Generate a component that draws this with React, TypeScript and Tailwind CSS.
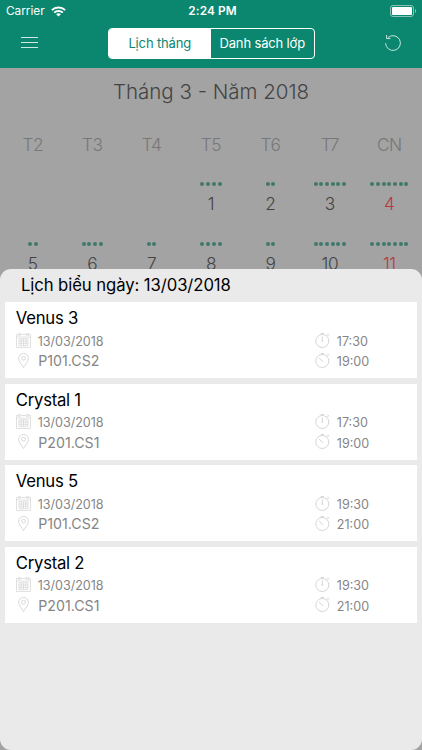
const weekdays = ['T2', 'T3', 'T4', 'T5', 'T6', 'T7', 'CN'];

const weeks = [
  [null, null, null, { day: 1, dots: 4 }, { day: 2, dots: 2 }, { day: 3, dots: 6 }, { day: 4, dots: 7 }],
  [
    { day: 5, dots: 2 },
    { day: 6, dots: 4 },
    { day: 7, dots: 2 },
    { day: 8, dots: 4 },
    { day: 9, dots: 2 },
    { day: 10, dots: 6 },
    { day: 11, dots: 7 },
  ],
];

const lessons = [
  { name: 'Venus 3', date: '13/03/2018', room: 'P101.CS2', start: '17:30', end: '19:00' },
  { name: 'Crystal 1', date: '13/03/2018', room: 'P201.CS1', start: '17:30', end: '19:00' },
  { name: 'Venus 5', date: '13/03/2018', room: 'P101.CS2', start: '19:30', end: '21:00' },
  { name: 'Crystal 2', date: '13/03/2018', room: 'P201.CS1', start: '19:30', end: '21:00' },
];

function WifiIcon() {
  return (
    <svg className="w-[15px] h-[11px]" viewBox="0 0 14 11" preserveAspectRatio="none" fill="none" stroke="white" strokeWidth="1.9">
      <path d="M0.8 4.1a8.8 8.8 0 0 1 12.4 0" />
      <path d="M3 6.6a5.7 5.7 0 0 1 8 0" />
      <path d="M7 10.6L4.8 8.3a3.2 3.2 0 0 1 4.4 0z" fill="white" stroke="none" />
    </svg>
  );
}

function BatteryIcon() {
  return (
    <svg className="w-[27px] h-[12px]" viewBox="0 0 27 12" fill="none">
      <rect x="0.5" y="0.5" width="23" height="11" rx="2.5" stroke="white" strokeOpacity="0.5" />
      <rect x="2" y="2" width="20" height="8" rx="1" fill="white" />
      <path d="M25 4v4c1.6-.5 1.6-3.5 0-4z" fill="white" fillOpacity="0.5" />
    </svg>
  );
}

function ReloadIcon() {
  return (
    <svg className="w-[18px] h-[18px]" viewBox="0 0 18 18" fill="none" stroke="white" strokeOpacity="0.85" strokeWidth="0.9">
      <path d="M1.6 9.2A7.4 7.4 0 1 0 4 3.6" />
      <path d="M2.6 1v3.6h3.8" />
    </svg>
  );
}

function CalendarIcon() {
  return (
    <svg className="w-[15px] h-[15px]" viewBox="0 0 15 15" fill="none" stroke="#d4d4d4" strokeWidth="0.7">
      <path d="M2.3 1.5H0.5v13h14v-13h-1.8M4.3 1.5h6.4M0.5 4h14" />
      <path d="M2.3 0.4h2v2h-2zM10.7 0.4h2v2h-2z" />
      <path d="M3 5.7h9v7H3zM5.25 5.7v7M7.5 5.7v7M9.75 5.7v7M3 8h9M3 10.3h9" />
    </svg>
  );
}

function PinIcon() {
  return (
    <svg className="w-[15px] h-[15px]" viewBox="0 0 15 15" fill="none" stroke="#cfcfcf" strokeWidth="0.8">
      <path d="M7.5 14.5C5.6 11.2 2.6 8.4 2.6 5.4a4.9 4.9 0 0 1 9.8 0c0 3-3 5.8-4.9 9.1z" />
      <circle cx="7.5" cy="5.2" r="1.9" />
    </svg>
  );
}

function StopwatchIcon({ ended = false }: { ended?: boolean }) {
  return (
    <svg className="w-[15px] h-[15px]" viewBox="0 0 15 15" fill="none" stroke="#cbcbcb" strokeWidth="0.8">
      <circle cx="7.3" cy="8" r="6.5" />
      <path d="M5.8 0.5h3M7.3 0.5v1M12 2.8l1.2-1.2M12.4 0.7l1.9 1.9" />
      {ended ? <path d="M4 5l4.3 4" /> : <path d="M7.3 3.4v5.2M6.5 8h1.6" />}
    </svg>
  );
}

export default function App() {
  return (
    <div className="w-[422px] h-[750px] flex flex-col overflow-hidden bg-[#a3a3a3] font-['Inter','Liberation_Sans',sans-serif]">
      <header className="h-[68px] shrink-0 bg-[#0b8770] text-white">
        {/* Status bar */}
        <div className="h-[22px] grid grid-cols-3 items-center pl-[6px] pr-[5px]">
          <div className="flex items-center gap-[6px] pt-px">
            <span className="text-[11.8px]">Carrier</span>
            <WifiIcon />
          </div>
          <span className="pt-px pl-[2px] text-center text-[11.8px] font-semibold tracking-[0.1px]">2:24 PM</span>
          <div className="flex justify-end">
            <BatteryIcon />
          </div>
        </div>

        {/* Navigation */}
        <div className="h-[42px] flex items-center justify-between pl-[21px] pr-[20px]">
          <button className="w-[17px] -mt-[2px] flex flex-col gap-[4px]">
            <span className="w-full h-px bg-white/80" />
            <span className="w-full h-px bg-white/80" />
            <span className="w-full h-px bg-white/80" />
          </button>
          <div className="w-[207px] h-[31px] flex rounded-[4px] border border-white overflow-hidden text-[13px] tracking-[-0.15px]">
            <button className="flex-1 pt-[2px] bg-white text-[#0b8770]">Lịch tháng</button>
            <button className="flex-1 pt-[2px] whitespace-nowrap">Danh sách lớp</button>
          </div>
          <button className="-mt-px">
            <ReloadIcon />
          </button>
        </div>
      </header>

      {/* Dimmed calendar behind the sheet */}
      <section className="h-[201px] shrink-0 px-[3px] text-[#434343] font-[350]">
        <h1 className="h-[46px] pt-px text-center text-[20.5px] leading-[45px] font-[350]">Tháng 3 - Năm 2018</h1>
        <div className="h-[60px] grid grid-cols-7 text-center text-[17.3px] leading-[61px] tracking-[-0.5px] text-[#777777]">
          {weekdays.map((weekday) => (
            <span key={weekday}>{weekday}</span>
          ))}
        </div>
        {weeks.map((week, row) => (
          <div key={row} className="h-[60px] grid grid-cols-7">
            {week.map((cell, col) => (
              <div key={col} className="flex flex-col items-center pt-[8px]">
                {cell && (
                  <>
                    <div className="flex gap-[1.7px]">
                      {Array.from({ length: cell.dots }, (_, i) => (
                        <span key={i} className="size-[4px] rounded-full bg-[#40796b]" />
                      ))}
                    </div>
                    <span className={`mt-[8px] text-[17.3px] leading-[20px] tracking-[-0.5px] ${col === 6 ? 'text-[#b8393f]' : ''}`}>
                      {cell.day}
                    </span>
                  </>
                )}
              </div>
            ))}
          </div>
        ))}
      </section>

      {/* Day schedule */}
      <section className="relative flex-1 rounded-[11px] bg-[#eaeaea] px-[5.4px]">
        <h2 className="h-[33.4px] pl-[15.5px] text-[16.7px] leading-[32px] tracking-[-0.08px] text-black">
          Lịch biểu ngày: 13/03/2018
        </h2>
        <div className="flex flex-col gap-[5.4px]">
          {lessons.map((lesson) => (
            <article key={lesson.name} className="h-[76px] bg-white px-[10.4px] pt-[5px]">
              <h3 className="text-[16.7px] leading-[22px] tracking-[-0.25px] text-black">{lesson.name}</h3>
              <div className="flex text-[#858585]">
                <div className="w-[299px] pt-px">
                  <div className="h-[20px] flex items-center gap-[7px]">
                    <CalendarIcon />
                    <span className="text-[12.6px] leading-[18px] tracking-[-0.05px] pt-[3px]">{lesson.date}</span>
                  </div>
                  <div className="h-[20px] flex items-center gap-[7.5px]">
                    <PinIcon />
                    <span className="text-[14.2px] leading-[18px] pt-[2px]">{lesson.room}</span>
                  </div>
                </div>
                <div className="pt-px text-[12.6px]">
                  <div className="h-[20px] flex items-center gap-[7px]">
                    <StopwatchIcon />
                    <span className="leading-[18px] pt-[3px]">{lesson.start}</span>
                  </div>
                  <div className="h-[20px] flex items-center gap-[7px]">
                    <StopwatchIcon ended />
                    <span className="leading-[18px] pt-[4px]">{lesson.end}</span>
                  </div>
                </div>
              </div>
            </article>
          ))}
        </div>
      </section>
    </div>
  );
}
